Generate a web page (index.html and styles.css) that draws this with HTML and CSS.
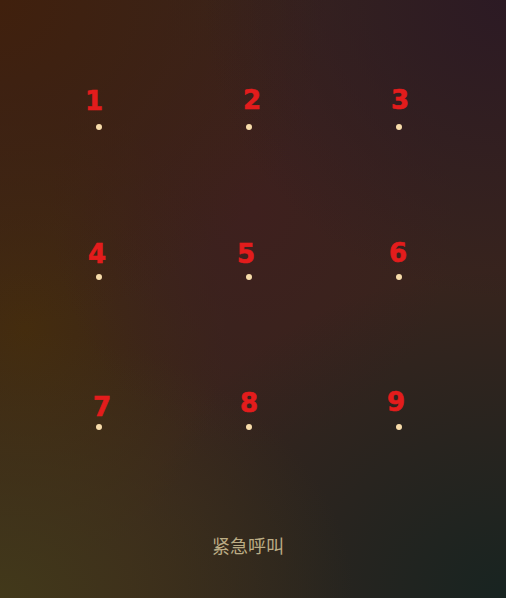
FILE: index.html
```html
<!DOCTYPE html>
<html lang="zh-CN">
<head>
<meta charset="utf-8">
<title>Lock screen</title>
<link rel="stylesheet" href="styles.css">
</head>
<body>
<main class="screen">
  <div class="pad">
    <div class="cell"><span class="num n1">1</span><span class="dot"></span></div>
    <div class="cell"><span class="num n2">2</span><span class="dot"></span></div>
    <div class="cell"><span class="num n3">3</span><span class="dot"></span></div>
    <div class="cell"><span class="num n4">4</span><span class="dot"></span></div>
    <div class="cell"><span class="num n5">5</span><span class="dot"></span></div>
    <div class="cell"><span class="num n6">6</span><span class="dot"></span></div>
    <div class="cell"><span class="num n7">7</span><span class="dot"></span></div>
    <div class="cell"><span class="num n8">8</span><span class="dot"></span></div>
    <div class="cell"><span class="num n9">9</span><span class="dot"></span></div>
  </div>
  <div class="emergency">紧急呼叫</div>
</main>
</body>
</html>
```
FILE: styles.css
```css
html, body {
  margin: 0;
  padding: 0;
}
body {
  width: 506px;
  height: 598px;
  overflow: hidden;
  font-family: "DejaVu Sans", "Noto Sans CJK SC", sans-serif;
}
.screen {
  width: 506px;
  height: 598px;
  box-sizing: border-box;
  padding-top: 52px;
  display: flex;
  flex-direction: column;
  align-items: stretch;
  background:
    radial-gradient(ellipse 70% 45% at 0% 100%, rgba(66, 57, 26, 1) 0%, rgba(66, 57, 26, 0) 100%),
    radial-gradient(ellipse 75% 55% at 100% 100%, rgba(24, 36, 33, 1) 0%, rgba(24, 36, 33, 0) 100%),
    radial-gradient(ellipse 60% 50% at 100% 0%, rgba(44, 26, 36, 1) 0%, rgba(44, 26, 36, 0) 100%),
    radial-gradient(ellipse 65% 55% at 0% 0%, rgba(64, 32, 13, 1) 0%, rgba(64, 32, 13, 0) 100%),
    radial-gradient(ellipse 40% 40% at 50% 35%, rgba(62, 32, 30, 1) 0%, rgba(62, 32, 30, 0) 100%),
    radial-gradient(ellipse 40% 40% at 5% 55%, rgba(68, 44, 14, 1) 0%, rgba(68, 44, 14, 0) 100%),
    #38241d;
}
.pad {
  display: grid;
  grid-template-columns: repeat(3, 150px);
  grid-auto-rows: 150px;
  padding-left: 24px;
}
.cell {
  display: flex;
  flex-direction: column;
  align-items: center;
  padding-top: 37px;
}
.num {
  display: block;
  font-family: "DejaVu Sans", sans-serif;
  font-weight: bold;
  font-size: 26px;
  line-height: 26px;
  height: 26px;
  color: #e31c1c;
  -webkit-text-stroke: 0.6px #e31c1c;
}
.dot {
  display: block;
  width: 6px;
  height: 6px;
  margin-top: 9px;
  border-radius: 50%;
  background: #f8dcaa;
}
.n1 { transform: translate(-5px, -1px); }
.n2 { transform: translate(3px, -2px); }
.n3 { transform: translate(1px, -2px); }
.n4 { transform: translate(-2px, 2px); }
.n5 { transform: translate(-3px, 2px); }
.n6 { transform: translate(-1px, 1px); }
.n7 { transform: translate(3px, 5px); }
.n8 { transform: translate(0px, 1px); }
.n9 { transform: translate(-3px, 0px); }
.emergency {
  margin-top: 31px;
  padding-right: 10px;
  text-align: center;
  font-family: "Noto Sans CJK SC", sans-serif;
  font-size: 18px;
  line-height: 24px;
  color: #bcad85;
}
```
